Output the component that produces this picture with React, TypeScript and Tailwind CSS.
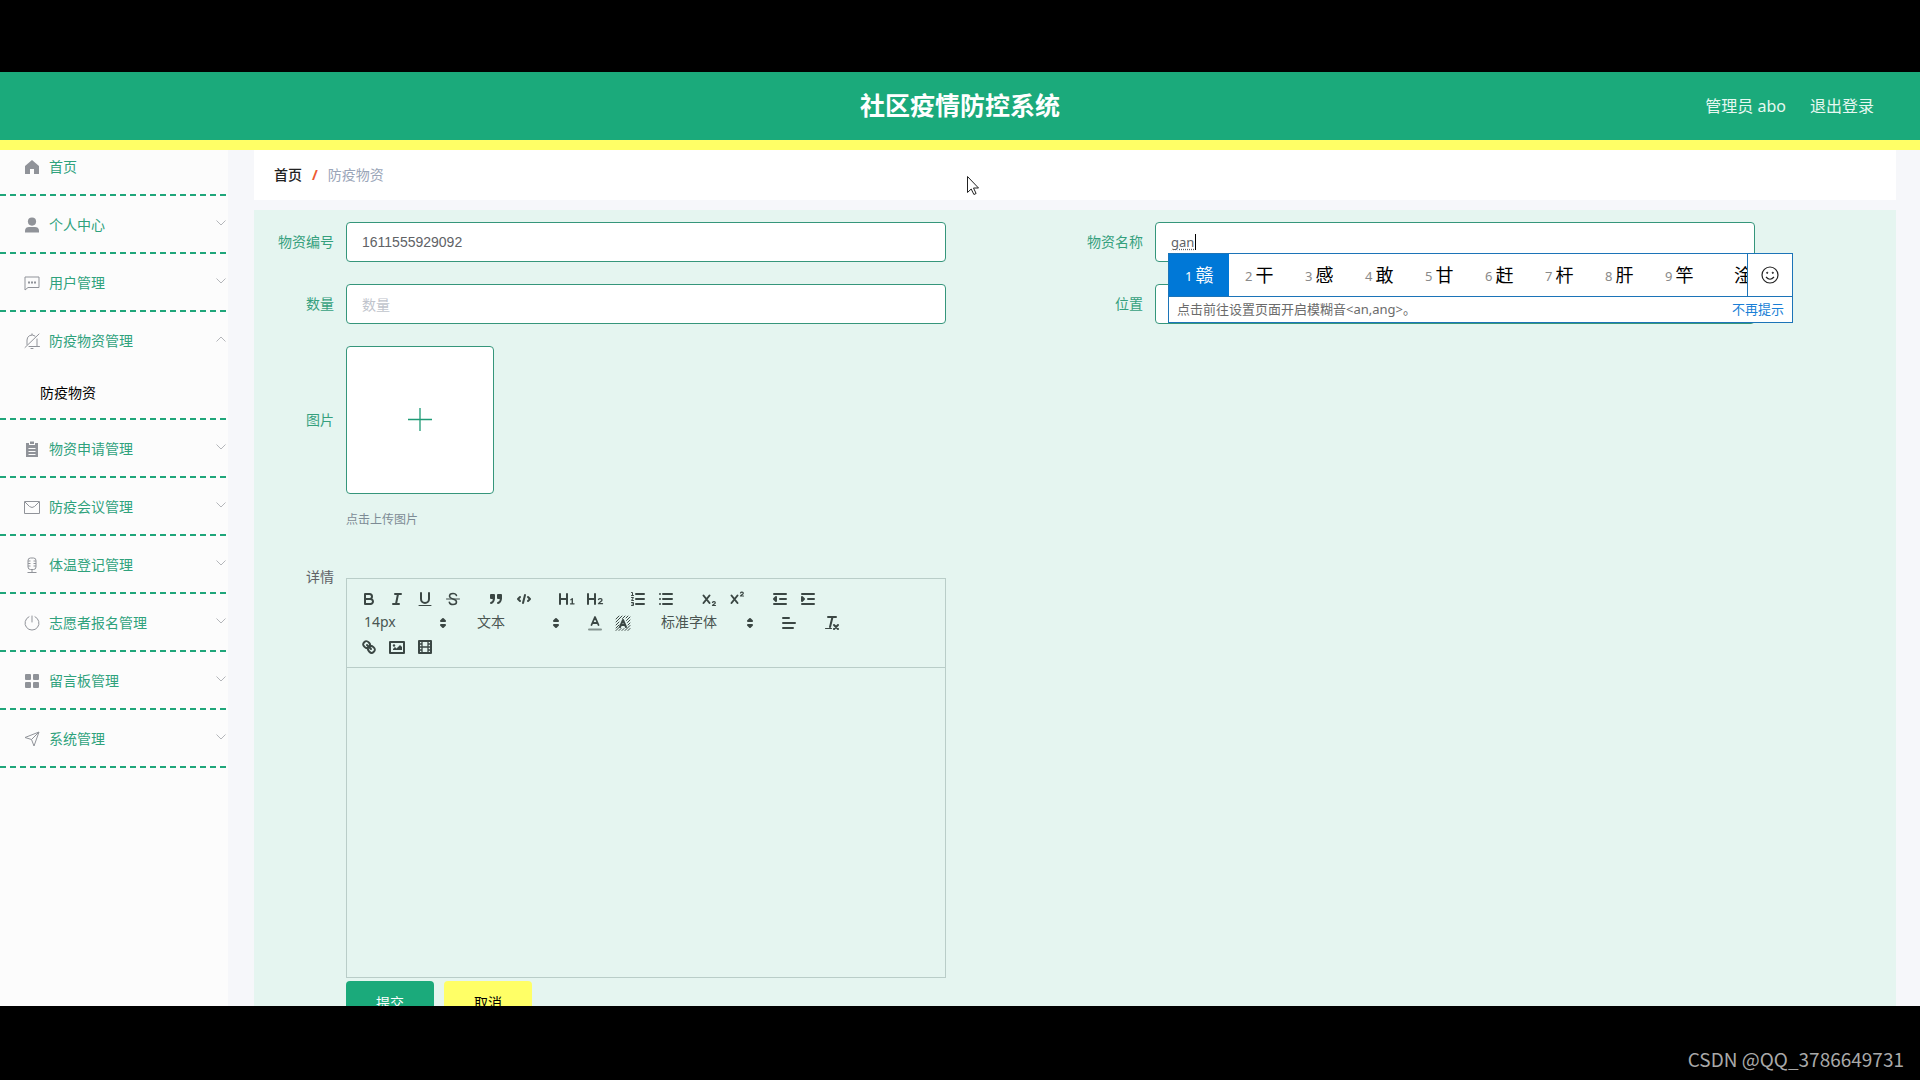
import React from "react";
import clsx from "clsx";

const HomeIcon = () => (
  <path d="M8 1 1 7v8h5v-5h4v5h5V7z" fill="currentColor" strokeLinejoin="round" />
);

const UserIcon = () => (
  <g fill="currentColor">
    <circle cx="8" cy="4.6" r="4.1" />
    <path d="M1 15.5v-2c0-2.400 2-3.500 4-3.500h6c2 0 4 1.100 4 3.500v2z" />
  </g>
);

const ChatIcon = () => (
  <g>
    <path d="M1 2h14v10.500H4L1 15z" fill="none" stroke="currentColor" strokeLinejoin="round" />
    <path d="M4 6.500h2v2H4zM7 6.500h2v2H7zM10 6.500h2v2h-2z" fill="currentColor" />
  </g>
);

const BellOffIcon = () => (
  <g fill="none" stroke="currentColor" strokeLinecap="round">
    <path d="M3 11.500V7a5 5 0 0 1 8-4M13 6v7.500M5 13.500h10.500M8 .8v1M15 1 1 14.500M7 15.500h2" />
  </g>
);

const ClipboardIcon = () => (
  <path
    d="M2 2h3v2h6V2h3v14H2zM6 .5h4V3H6zM4.500 7v1h7V7zm0 3v1h7v-1zm0 3v1h7v-1z"
    fill="currentColor"
    fillRule="evenodd"
  />
);

const MailIcon = () => (
  <g fill="none" stroke="currentColor" strokeLinejoin="round">
    <path d="M.5 2.500h15v12H.5z" />
    <path d="M1 3l4.500 4.500q2.500 2 5 0L15 3" />
  </g>
);

const MicIcon = () => (
  <g fill="none" stroke="currentColor">
    <rect x="4" y="1" width="8" height="11.500" rx="2.500" />
    <path d="M4 4h2.500M4 6.500h2.500M4 9h2.500M12 4H9.500M12 6.500H9.500M12 9H9.500M8 12.500V15M3.500 15.500h9" />
  </g>
);

const PowerIcon = () => (
  <path
    d="M8 1v6M5 1.700a7 7 0 1 0 6 0"
    fill="none"
    stroke="currentColor"
    strokeLinecap="round"
  />
);

const GridIcon = () => (
  <g fill="currentColor">
    <rect x="1" y="1" width="6" height="6" rx="1" />
    <rect x="9" y="1" width="6" height="6" rx="1" />
    <rect x="1" y="9" width="6" height="6" rx="1" />
    <rect x="9" y="9" width="6" height="6" rx="1" />
  </g>
);

const SendIcon = () => (
  <path
    d="M15 1 1 6.500l6.500 2L10 15zL7.500 8.500"
    fill="none"
    stroke="currentColor"
    strokeLinejoin="round"
  />
);

const menus = [
  { title: "首页", icon: HomeIcon, leaf: true },
  { title: "个人中心", icon: UserIcon },
  { title: "用户管理", icon: ChatIcon },
  { title: "防疫物资管理", icon: BellOffIcon, children: ["防疫物资"] },
  { title: "物资申请管理", icon: ClipboardIcon },
  { title: "防疫会议管理", icon: MailIcon },
  { title: "体温登记管理", icon: MicIcon },
  { title: "志愿者报名管理", icon: PowerIcon },
  { title: "留言板管理", icon: GridIcon },
  { title: "系统管理", icon: SendIcon },
];

const Sidebar = () => (
  <aside className="w-[228px] shrink-0 overflow-hidden bg-[#fcfcfc]">
    <ul className="-mt-3">
      {menus.map(({ title, icon: Icon, leaf, children }) => (
        <li key={title}>
          <button className="flex h-14 w-full items-center pl-6 pr-[2px] pt-[2px] text-left text-sm text-[#2fa27c]">
            <svg viewBox="0 0 16 16" className="mr-[9px] size-4 text-[#909399]">
              <Icon />
            </svg>
            <span className="flex-1">{title}</span>
            {!leaf && (
              <svg
                viewBox="0 0 10 6"
                className={clsx("mb-1 h-[6px] w-[10px]", children && "rotate-180")}
              >
                <path d="M.5.5 5 5 9.500.5" fill="none" stroke="#b4b6ba" />
              </svg>
            )}
          </button>
          {children?.map((child) => (
            <a key={child} href="#" className="block h-[50px] pl-10 text-sm leading-[50px] text-black">
              {child}
            </a>
          ))}
          <Dashes />
        </li>
      ))}
    </ul>
  </aside>
);

const Dashes = () => (
  <div className="h-[2px] bg-[repeating-linear-gradient(90deg,#1fa67a_0_6px,transparent_6px_10px)]" />
);

/* ---------- editor toolbar ---------- */

const line = { fill: "none", stroke: "#3b4744", strokeWidth: 2, strokeLinecap: "round", strokeLinejoin: "round" } as const;
const thin = { ...line, strokeWidth: 1 } as const;
const ink = "#3b4744";

const icons: Record<string, React.ReactNode> = {
  bold: (
    <g {...line}>
      <path d="M5 4h4.500A2.500 2.500 0 0 1 12 6.500 2.500 2.500 0 0 1 9.500 9H5zM5 9h5.500a2.500 2.500 0 0 1 2.500 2.500 2.500 2.500 0 0 1-2.500 2.500H5z" />
    </g>
  ),
  italic: (
    <g {...line}>
      <path d="M7 4h6M5 14h6M8 14l2-10" />
    </g>
  ),
  underline: (
    <g {...line}>
      <path d="M5 3v6a4 4 0 0 0 8 0V3" />
      <path d="M3 15.500h12" strokeWidth="1" />
    </g>
  ),
  strike: (
    <g>
      <path d="M2.500 9h13" {...thin} />
      <path
        d="M12.500 5.500C12 4 10.700 3.500 9 3.500c-2 0-3.500 1-3.500 2.600C5.500 8 7.500 8.500 9 9c2 .6 3.500 1.200 3.500 3 0 1.500-1.500 2.500-3.500 2.500-1.900 0-3.300-.7-3.700-2.300"
        {...line}
        strokeWidth="1.500"
      />
    </g>
  ),
  blockquote: (
    <g {...line} fill={ink}>
      <path d="M4 5h3v3H4zM11 5h3v3h-3z" />
      <path d="M7 8c0 4.031-3 5-3 5M14 8c0 4.031-3 5-3 5" fill="none" />
    </g>
  ),
  code: (
    <g {...line}>
      <path d="M5 7 3 9l2 2M13 7l2 2-2 2M10 5 8 13" />
    </g>
  ),
  h1: (
    <path
      fill={ink}
      d="M10 4v10a1 1 0 0 1-2 0v-4H3v4a1 1 0 0 1-2 0V4a1 1 0 0 1 2 0v4h5V4a1 1 0 0 1 2 0zm6.068 9.209H14.980V8.592a.6.6 0 0 0-.605-.605.620.620 0 0 0-.44.187l-1.500 1.111a.59.59 0 0 0-.11.83.59.59 0 0 0 .83.13l.45-.38v3.344h-1.090a.56.56 0 0 0-.605.604.56.56 0 0 0 .605.585h3.553a.56.56 0 0 0 .605-.585.56.56 0 0 0-.605-.604z"
    />
  ),
  h2: (
    <g>
      <path fill={ink} d="M10 4v10a1 1 0 0 1-2 0v-4H3v4a1 1 0 0 1-2 0V4a1 1 0 0 1 2 0v4h5V4a1 1 0 0 1 2 0z" />
      <path d="M12.500 9.500c.5-1.300 3.500-1.300 3.500.4 0 1.400-2.500 2-3.500 3.800h4" {...line} strokeWidth="1.300" />
    </g>
  ),
  ordered: (
    <g {...line}>
      <path d="M7 4h8M7 9h8M7 14h8" />
      <path d="M2.500 2.500h1v3M2.500 5.500h2M2.500 7.500h2L2.500 10.500h2M2.500 12.500h2v3h-2M3 14h1" strokeWidth="1" />
    </g>
  ),
  bullet: (
    <g {...line}>
      <path d="M6 4h9M6 9h9M6 14h9M3 4h0M3 9h0M3 14h0" />
    </g>
  ),
  sub: (
    <g {...line}>
      <path d="M3.500 5.500l6 7.500M9.500 5.500l-6 7.500" />
      <path d="M12.500 12.500c.5-1.200 2.800-1 2.800.3 0 1-2.200 1.700-2.800 2.700h3" strokeWidth="1.200" />
    </g>
  ),
  sup: (
    <g {...line}>
      <path d="M3.500 5.500l6 7.500M9.500 5.500l-6 7.500" />
      <path d="M12.500 3c.5-1.200 2.800-1 2.800.3 0 1-2.200 1.700-2.800 2.700h3" strokeWidth="1.200" />
    </g>
  ),
  outdent: (
    <g {...line}>
      <path d="M3 14h12M3 4h12M9 9h6" />
      <path d="M5 7v4L3 9z" fill={ink} />
    </g>
  ),
  indent: (
    <g {...line}>
      <path d="M3 14h12M3 4h12M9 9h6" />
      <path d="M3 7v4l2-2z" fill={ink} />
    </g>
  ),
  color: (
    <g {...line}>
      <path d="M3 15.500h12" stroke="#84938f" />
      <path d="M5.500 11 9 3l3.500 8M11.600 9H6.400" strokeWidth="1.800" />
    </g>
  ),
  background: (
    <g>
      <path
        d="M2 5l3-3M2 8l6-6M2 11l3-3M2 14l3-3M2 16.500l4-4M5 16.500l2-2M8 16.500l2-2M11 16.500l5-5M14 16.500l2-2M8.500 4.500 11 2M12 4l2-2M12.500 6.500 16 3M13.500 8.500 16 6M14 11l2-2"
        {...thin}
      />
      <path d="M6 13 9 6l3 7M11 11H7" {...line} />
    </g>
  ),
  align: (
    <g {...line}>
      <path d="M3 9h12M3 14h10M3 4h6" />
    </g>
  ),
  clean: (
    <g {...line}>
      <path d="M5 3h8M9.500 3 7 13" />
      <path d="M2.500 14.500h6" strokeWidth="1" />
      <path d="M11 11l4 4M15 11l-4 4" />
    </g>
  ),
  link: (
    <g {...line}>
      <path d="M7 7l4 4" />
      <path d="M8.900 4.577a3.476 3.476 0 0 1 .36 4.679A3.476 3.476 0 0 1 4.577 8.900C3.185 7.500 2.035 6.400 4.217 4.217S7.500 3.185 8.900 4.577zM13.423 9.100a3.476 3.476 0 0 0-4.679-.36 3.476 3.476 0 0 0 .36 4.679c1.392 1.392 2.500 2.542 4.679.36s1.032-3.283-.36-4.679z" />
    </g>
  ),
  image: (
    <g>
      <rect x="2" y="4" width="14" height="11" {...line} />
      <circle cx="6" cy="7.500" r="1.200" fill={ink} />
      <path d="M5 12v-1l2-2 1.500 1.500L12 7l2 2v3z" fill={ink} />
    </g>
  ),
  video: (
    <g {...line}>
      <path d="M3 3h12v12H3z" />
      <path d="M6 3v12M12 3v12M6 9h6M3 6h3M3 9h3M3 12h3M12 6h3M12 9h3M12 12h3" strokeWidth="1.300" />
    </g>
  ),
};

const ToolGroup = ({ names }: { names: string[] }) => (
  <div className="mr-[15px] flex">
    {names.map((name) => (
      <button key={name} type="button" aria-label={name} className="h-6 w-7 px-[5px] py-[3px]">
        <svg viewBox="0 0 18 18" className="size-[18px]">
          {icons[name]}
        </svg>
      </button>
    ))}
  </div>
);

const Picker = ({ label, value, wide }: { label: string; value: string; wide?: boolean }) => (
  <div className={clsx("relative mr-[15px] h-6", wide ? "w-[108px]" : "w-[98px]")}>
    <select
      aria-label={label}
      className="block h-[22px] w-full appearance-none bg-transparent pl-[9px] text-sm leading-[22px] text-[#4a5552]"
    >
      <option>{value}</option>
    </select>
    <svg viewBox="0 0 18 18" className="pointer-events-none absolute right-px top-[3px] size-[18px]">
      <path d="M7 11l2 2 2-2zM7 7l2-2 2 2z" {...line} fill={ink} />
    </svg>
  </div>
);

const Editor = () => (
  <div className="max-w-[600px] border border-[#b9cdc8]">
    <div className="flex flex-wrap border-b border-[#b9cdc8] p-2">
      <ToolGroup names={["bold", "italic", "underline", "strike"]} />
      <ToolGroup names={["blockquote", "code"]} />
      <ToolGroup names={["h1", "h2"]} />
      <ToolGroup names={["ordered", "bullet"]} />
      <ToolGroup names={["sub", "sup"]} />
      <ToolGroup names={["outdent", "indent"]} />
      <Picker label="字号" value="14px" />
      <Picker label="标题" value="文本" />
      <ToolGroup names={["color", "background"]} />
      <Picker label="字体" value="标准字体" wide />
      <ToolGroup names={["align"]} />
      <ToolGroup names={["clean"]} />
      <ToolGroup names={["link", "image", "video"]} />
    </div>
    <textarea id="detail" className="block h-[309px] w-full resize-none bg-transparent p-4 text-sm outline-none" />
  </div>
);

/* ---------- input method popup ---------- */

const candidates = ["赣", "干", "感", "敢", "甘", "赶", "杆", "肝", "竿"];

const ImePopup = () => (
  <div className="absolute left-[13px] top-[31px] z-20 w-[625px] border border-[#1c74b8] bg-white">
    <div className="flex h-[42px]">
      <ol className="flex flex-1 overflow-hidden">
        {candidates.map((word, index) => (
          <li
            key={word}
            className={clsx(
              "flex w-[60px] shrink-0 items-center gap-[3px] pl-4",
              index === 0 ? "bg-[#0078d7] text-white" : "text-black"
            )}
          >
            <span className={clsx("pt-1 text-[13px]", index > 0 && "text-[#8a8a8a]")}>{index + 1}</span>
            <span className="text-lg">{word}</span>
          </li>
        ))}
        <li className="flex shrink-0 items-center pl-[25px] text-lg text-black">淦</li>
      </ol>
      <button type="button" aria-label="表情" className="flex w-[45px] items-center justify-center border-l border-[#1c74b8]">
        <svg viewBox="0 0 18 18" className="size-[18px]" fill="none" stroke="#222">
          <circle cx="9" cy="9" r="8" strokeWidth="1.200" />
          <path d="M5 11q4 4.500 8 0" strokeWidth="1.200" />
          <circle cx="6.200" cy="6.800" r=".6" fill="#222" />
          <circle cx="11.800" cy="6.800" r=".6" fill="#222" />
        </svg>
      </button>
    </div>
    <div className="flex h-[26px] items-center justify-between border-t border-[#1c74b8] px-2 text-[13px] text-[#6b6b6b]">
      <span>点击前往设置页面开启模糊音&lt;an,ang&gt;。</span>
      <button type="button" className="text-[#1a7fd6]">
        不再提示
      </button>
    </div>
  </div>
);

/* ---------- form ---------- */

const inputClass =
  "h-10 w-full rounded border border-[#35967b] bg-white px-[15px] text-[#606266] outline-none placeholder:text-[#c0c4cc]";

const Field = ({
  id,
  label,
  children,
}: {
  id: string;
  label: string;
  children: React.ReactNode;
}) => (
  <div className="flex">
    <label htmlFor={id} className="w-20 shrink-0 pr-3 text-right text-sm leading-10 text-[#35a07d]">
      {label}
    </label>
    <div className="relative w-full max-w-[600px]">{children}</div>
  </div>
);

const MaterialForm = () => (
  <form className="mt-[10px] flex-1 bg-[#e5f5f0] px-3 pt-3" onSubmit={(e) => e.preventDefault()}>
    <div className="grid grid-cols-2 gap-y-[22px]">
      <Field id="code" label="物资编号">
        <input
          id="code"
          defaultValue="1611555929092"
          className={clsx(inputClass, "font-['Liberation_Sans',sans-serif] text-sm")}
        />
      </Field>
      <Field id="name" label="物资名称">
        <input
          id="name"
          defaultValue="gan"
          className={clsx(inputClass, "text-[13px] underline decoration-dotted underline-offset-2")}
        />
        <span className="absolute left-10 top-3 h-4 w-px bg-black" />
        <ImePopup />
      </Field>
      <Field id="amount" label="数量">
        <input id="amount" placeholder="数量" className={clsx(inputClass, "text-sm")} />
      </Field>
      <Field id="place" label="位置">
        <input id="place" placeholder="位置" className={clsx(inputClass, "text-sm")} />
      </Field>
    </div>
    <div className="mt-[22px] flex">
      <span className="w-20 shrink-0 pr-3 text-right text-sm leading-[148px] text-[#35a07d]">图片</span>
      <div>
        <button
          type="button"
          aria-label="点击上传图片"
          className="flex size-[148px] items-center justify-center rounded border border-[#35967b] bg-white"
        >
          <svg viewBox="0 0 24 24" className="size-6">
            <path d="M12 0v23M0 11.500h24" stroke="#1f9a76" strokeWidth="1.300" />
          </svg>
        </button>
        <p className="mt-[6px] text-xs leading-10 text-[#7d8b95]">点击上传图片</p>
      </div>
    </div>
    <div className="mt-[17px] flex">
      <label htmlFor="detail" className="w-20 shrink-0 pr-3 text-right text-sm leading-10 text-[#606266]">
        详情
      </label>
      <div className="mt-[21px] flex-1">
        <Editor />
        <div className="mt-[3px] flex gap-[10px]">
          <button type="submit" className="h-11 w-[88px] rounded bg-[#1baa7b] text-sm text-white">
            提交
          </button>
          <button type="button" className="h-11 w-[88px] rounded bg-[#ffff66] text-sm text-black">
            取消
          </button>
        </div>
      </div>
    </div>
  </form>
);

const Header = () => (
  <header className="relative flex h-[78px] shrink-0 items-center justify-end border-b-[10px] border-[#ffff66] bg-[#1baa7b] pr-[46px] text-base text-[#e6f8f1]">
    <h1 className="absolute inset-x-0 text-center text-[25px] font-bold text-white">社区疫情防控系统</h1>
    <span className="relative mr-6">管理员 abo</span>
    <a href="#" className="relative">
      退出登录
    </a>
  </header>
);

const Breadcrumb = () => (
  <nav className="flex h-[50px] shrink-0 items-center bg-white pl-5 text-sm">
    <a href="#" className="font-medium text-[#222]">
      首页
    </a>
    <span className="mx-[10px] font-bold text-[#ee5a33]">/</span>
    <span className="text-[#9aa5b8]">防疫物资</span>
  </nav>
);

const Pointer = () => (
  <svg viewBox="0 0 12 19" className="pointer-events-none absolute left-[967px] top-[104px] z-30 h-[19px] w-3">
    <path d="M.5.5v16l3.700-3.500 2.700 5.500 2.200-1-2.600-5.500h5z" fill="#fff" stroke="#222" />
  </svg>
);

export default function App() {
  return (
    <div className="flex h-screen flex-col bg-black font-['Noto_Sans','Noto_Sans_CJK_SC',sans-serif]">
      <div className="relative mt-[72px] flex min-h-0 flex-1 flex-col overflow-hidden bg-[#f6f7fa]">
        <Header />
        <div className="flex min-h-0 flex-1">
          <Sidebar />
          <main className="ml-[26px] mr-6 flex min-w-0 flex-1 flex-col">
            <Breadcrumb />
            <MaterialForm />
          </main>
        </div>
        <Pointer />
      </div>
      <footer className="flex h-[74px] shrink-0 items-center justify-end pr-4 pt-8 font-['Noto_Sans_CJK_SC',sans-serif] text-[19px] text-[#a9a9a9]">
        CSDN @QQ_3786649731
      </footer>
    </div>
  );
}
